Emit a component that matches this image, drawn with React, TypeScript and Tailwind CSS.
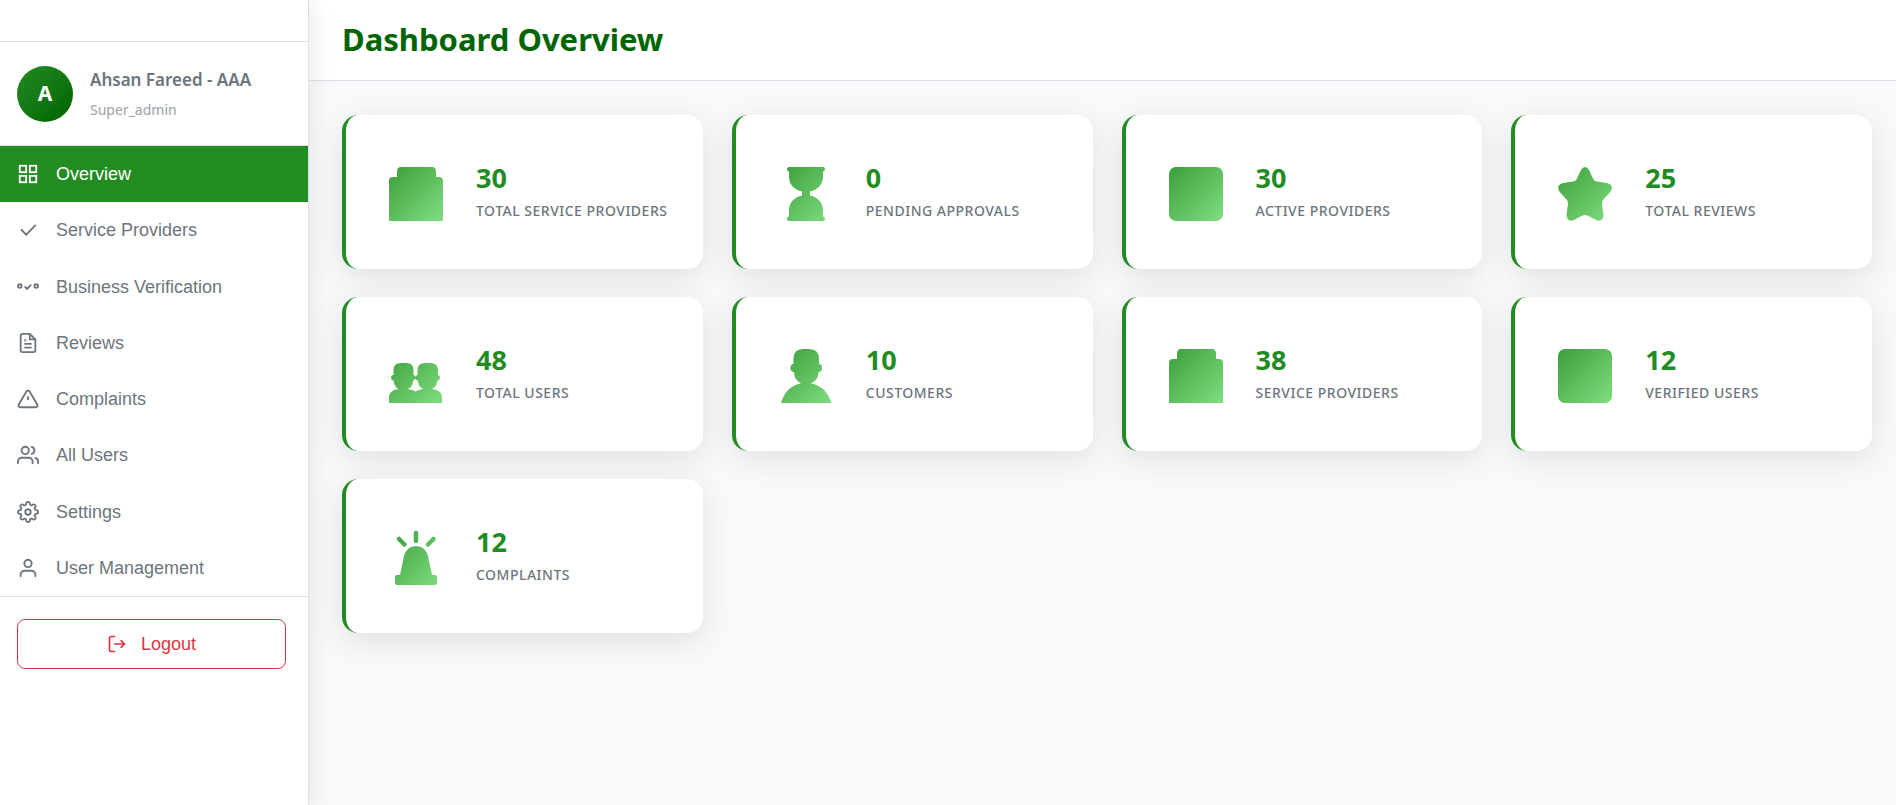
import type { ReactNode } from 'react';

const SEGOE = "font-['Segoe_UI','Noto_Sans',sans-serif]";
const ARIAL = "font-['Liberation_Sans',Arial,sans-serif]";

function Icon({ children, className = 'size-[22px]' }: { children: ReactNode; className?: string }) {
  return (
    <svg
      viewBox="0 0 24 24"
      fill="none"
      stroke="currentColor"
      strokeWidth="2"
      strokeLinecap="round"
      className={`shrink-0 ${className}`}
      aria-hidden="true"
    >
      {children}
    </svg>
  );
}

const navItems: { label: string; icon: ReactNode }[] = [
  {
    label: 'Overview',
    icon: (
      <>
        <rect x="3" y="3" width="7" height="7" />
        <rect x="14" y="3" width="7" height="7" />
        <rect x="14" y="14" width="7" height="7" />
        <rect x="3" y="14" width="7" height="7" />
      </>
    ),
  },
  { label: 'Service Providers', icon: <path d="M5 12l5 5L20 7" /> },
  {
    label: 'Business Verification',
    icon: (
      <>
        <path d="M9 12l2 2 4-4" />
        <circle cx="3" cy="11" r="2" />
        <circle cx="21" cy="11" r="2" />
      </>
    ),
  },
  {
    label: 'Reviews',
    icon: (
      <>
        <path d="M14 2H6a2 2 0 0 0-2 2v16a2 2 0 0 0 2 2h12a2 2 0 0 0 2-2V8z" />
        <path d="M14 2v6h6M16 13H8M16 17H8M10 9H8" strokeLinecap="butt" />
      </>
    ),
  },
  {
    label: 'Complaints',
    icon: (
      <>
        <path d="M10.29 3.86L1.82 18a2 2 0 0 0 1.71 3h16.94a2 2 0 0 0 1.71-3L13.71 3.86a2 2 0 0 0-3.42 0z" />
        <path d="M12 9v4" strokeLinecap="butt" />
      </>
    ),
  },
  {
    label: 'All Users',
    icon: (
      <>
        <path d="M17 21v-2a4 4 0 0 0-4-4H5a4 4 0 0 0-4 4v2" />
        <circle cx="9" cy="7" r="4" />
        <path d="M23 21v-2a4 4 0 0 0-3-3.87M16 3.13a4 4 0 0 1 0 7.75" />
      </>
    ),
  },
  {
    label: 'Settings',
    icon: (
      <>
        <circle cx="12" cy="12" r="3" />
        <path d="M19.4 15a1.65 1.65 0 0 0 .33 1.82l.06.06a2 2 0 0 1 0 2.83 2 2 0 0 1-2.83 0l-.06-.06a1.65 1.65 0 0 0-1.82-.33 1.65 1.65 0 0 0-1 1.51V21a2 2 0 0 1-2 2 2 2 0 0 1-2-2v-.09A1.65 1.65 0 0 0 9 19.4a1.65 1.65 0 0 0-1.82.33l-.06.06a2 2 0 0 1-2.83 0 2 2 0 0 1 0-2.83l.06-.06a1.65 1.65 0 0 0 .33-1.82 1.65 1.65 0 0 0-1.51-1H3a2 2 0 0 1-2-2 2 2 0 0 1 2-2h.09A1.65 1.65 0 0 0 4.6 9a1.65 1.65 0 0 0-.33-1.82l-.06-.06a2 2 0 0 1 0-2.83 2 2 0 0 1 2.83 0l.06.06a1.65 1.65 0 0 0 1.82.33H9a1.65 1.65 0 0 0 1-1.51V3a2 2 0 0 1 2-2 2 2 0 0 1 2 2v.09a1.65 1.65 0 0 0 1 1.51 1.65 1.65 0 0 0 1.82-.33l.06-.06a2 2 0 0 1 2.83 0 2 2 0 0 1 0 2.83l-.06.06a1.65 1.65 0 0 0-.33 1.82V9a1.65 1.65 0 0 0 1.51 1H21a2 2 0 0 1 2 2 2 2 0 0 1-2 2h-.09a1.65 1.65 0 0 0-1.51 1z" />
      </>
    ),
  },
  {
    label: 'User Management',
    icon: (
      <>
        <path d="M20 21v-2a4 4 0 0 0-4-4H8a4 4 0 0 0-4 4v2" />
        <circle cx="12" cy="7" r="4" />
      </>
    ),
  },
];

/* Glyph shapes share a 54-unit box so that the gradient runs over the whole tile. */
const shapes = {
  building: (
    <path d="M12 0H43Q47 0 47 5V10H50Q54 10 54 14V54H0V14Q0 10 4 10H8V5Q8 0 12 0Z" />
  ),
  hourglass: (
    <path d="M10 0H44Q46 0 46 2T44 4.5V10C44 17 39 23 31 24.5V28.5C39 30 44 36 44 43V49.5Q46 49.5 46 51.7T44 54H10Q8 54 8 51.7T10 49.5V43C10 36 15 30 23 28.5V24.5C15 23 10 17 10 10V4.5Q8 4 8 2T10 0Z" />
  ),
  square: <rect width="54" height="54" rx="7" />,
  star: (
    <path d="M23 3Q27-3 31 3L35 11.5Q36 14 39 14.5L49 16Q56 18 53 24L45 33Q44 34.5 44 37L45.5 48Q45 55.5 38 53L30 48.8Q27 47.3 24 48.8L16 53Q9 55.5 8.5 48L10 37Q10 34.5 9 33L1 24Q-2 18 5 16L15 14.5Q18 14 19 11.5Z" />
  ),
  users: (
    <path d="M12 14H17Q24.5 14 24.5 21V26Q26.5 26.5 26.5 28Q26.5 26.5 28.5 26V21Q28.5 14 36 14H41Q49 14 49 21V26Q51 26 51 28.500T48.5 31.5Q48 37.5 43 40Q53 41.5 53 48V54H0V48Q0 41.5 9.5 40Q5 37.5 4.5 31.5Q2 31 2 28.500T4.5 26V21Q4.5 14 12 14ZM26.5 29.500Q26 31.5 24 31.5Q24 37.5 19 40Q24 40.5 26.5 42.5Q29 40.5 34 40Q29 37.5 29 31.5Q27 31.5 26.5 29.500Z" />
  ),
  person: (
    <path d="M24 0H30Q40 0 40 10V15Q43 15 43 19T39.5 23Q39.5 31 32 34.5Q47 37 52.5 54H2Q7 37 22 34.5Q15 31 15 23Q11.5 23 11.5 19T14.5 15V10Q14.5 0 24 0Z" />
  ),
  siren: (
    <>
      <path d="M27 15Q36 15 39 25L43 44H46Q48 44 48 46V52Q48 54 46 54H8Q6 54 6 52V46Q6 44 8 44H11L15 25Q18 15 27 15Z" />
      <path d="M27 2V10M10 8L15.5 13.5M44.5 8L39 13.5" fill="none" stroke="url(#tile-siren)" strokeWidth="4.5" strokeLinecap="round" />
    </>
  ),
};

type Shape = keyof typeof shapes;

function Glyph({ shape, id }: { shape: Shape; id: string }) {
  return (
    <svg viewBox="0 0 54 54" className="size-[54px] overflow-visible" fill={`url(#tile-${id})`} aria-hidden="true">
      <defs>
        <linearGradient id={`tile-${id}`} gradientUnits="userSpaceOnUse" x1="0" y1="0" x2="54" y2="54">
          <stop offset="0" stopColor="#3a9e3a" />
          <stop offset="1" stopColor="#80de80" />
        </linearGradient>
      </defs>
      {shapes[shape]}
    </svg>
  );
}

const stats: { value: number; label: string; shape: Shape }[] = [
  { value: 30, label: 'Total Service Providers', shape: 'building' },
  { value: 0, label: 'Pending Approvals', shape: 'hourglass' },
  { value: 30, label: 'Active Providers', shape: 'square' },
  { value: 25, label: 'Total Reviews', shape: 'star' },
  { value: 48, label: 'Total Users', shape: 'users' },
  { value: 10, label: 'Customers', shape: 'person' },
  { value: 38, label: 'Service Providers', shape: 'building' },
  { value: 12, label: 'Verified Users', shape: 'square' },
  { value: 12, label: 'Complaints', shape: 'siren' },
];

function StatCard({ value, label, shape, index }: { value: number; label: string; shape: Shape; index: number }) {
  return (
    <article className="flex items-center gap-[18px] rounded-2xl border-l-4 border-[#228b22] bg-white px-7 py-[35px] shadow-[0_8px_32px_rgba(0,0,0,0.1)]">
      <div className="flex size-[84px] shrink-0 items-center justify-center pt-1">
        <Glyph shape={shape} id={shape === 'siren' ? 'siren' : String(index)} />
      </div>
      <div className="pt-[3px]">
        <p className="text-[27px] leading-[34px] font-bold text-[#228b22]">{value}</p>
        <p className="text-sm leading-8 font-medium tracking-[0.5px] whitespace-nowrap text-[#6c757d] uppercase">{label}</p>
      </div>
    </article>
  );
}

export default function App() {
  return (
    <div className={`flex min-h-screen bg-[#f8f9fb] ${SEGOE}`}>
      <aside className="relative z-10 w-[309px] shrink-0 border-r border-[#dee2e6] bg-white shadow-[4px_0_20px_rgba(0,0,0,0.08)]">
        <div className="h-[42px] border-b border-[#dee2e6]" />
        <div className="flex items-center gap-[17px] border-b border-[#dee2e6] px-[17px] py-[23px]">
          <div className="flex size-14 shrink-0 items-center justify-center rounded-full bg-linear-to-br from-[#228b22] to-[#006400] text-[21px] font-bold text-white">
            A
          </div>
          <div className="pt-px">
            <p className="text-[17px] leading-7 font-semibold text-[#6c757d]">Ahsan Fareed - AAA</p>
            <p className="pt-1 text-sm leading-6 text-[#9aa0a6]">Super_admin</p>
          </div>
        </div>
        <nav className={`grid min-h-[450px] grid-rows-8 text-lg text-[#6c757d] ${ARIAL}`}>
          {navItems.map((item, i) => (
            <a
              key={item.label}
              href="#"
              aria-current={i === 0 ? 'page' : undefined}
              className={`flex items-center gap-[17px] px-[17px] ${i === 0 ? 'bg-[#228b22] text-white' : ''}`}
            >
              <Icon>{item.icon}</Icon>
              {item.label}
            </a>
          ))}
        </nav>
        <div className="border-t border-[#dee2e6] pt-[22px] pr-[22px] pl-[17px]">
          <button
            type="button"
            className={`flex h-[50px] w-full items-center justify-center gap-[14px] rounded-lg border border-[#dc3545] text-lg text-[#dc3545] ${ARIAL}`}
          >
            <Icon className="size-5">
              <path d="M9 21H5a2 2 0 0 1-2-2V5a2 2 0 0 1 2-2h4M17 16l4-4-4-4M21 12H9" />
            </Icon>
            Logout
          </button>
        </div>
      </aside>

      <div className="min-w-0 flex-1">
        <header className="border-b border-[#dee2e6] bg-white pt-[19px] pb-[21px] pl-[33px]">
          <h1 className="text-[31px] leading-10 font-bold text-[#006400]">Dashboard Overview</h1>
        </header>
        <main className="grid grid-cols-4 gap-x-[29px] gap-y-7 pt-[34px] pr-6 pb-8 pl-[33px]">
          {stats.map((stat, i) => (
            <StatCard key={stat.label} {...stat} index={i} />
          ))}
        </main>
      </div>
    </div>
  );
}
